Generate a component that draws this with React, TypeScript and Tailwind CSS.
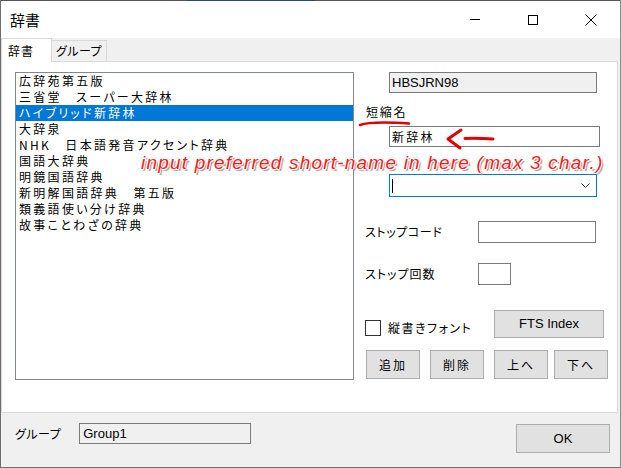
import React from "react";

const items = [
  "広辞苑第五版",
  "三省堂　スーパー大辞林",
  "ハイブリッド新辞林",
  "大辞泉",
  "NHK　日本語発音アクセント辞典",
  "国語大辞典",
  "明鏡国語辞典",
  "新明解国語辞典　第五版",
  "類義語使い分け辞典",
  "故事ことわざの辞典",
];

function Btn({ children, className = "" }: { children: React.ReactNode; className?: string }) {
  return (
    <div
      className={
        "flex items-center justify-center bg-[#e1e1e1] border border-[#adadad] text-[12px] text-black " +
        className
      }
    >
      {children}
    </div>
  );
}

export default function App() {
  return (
    <div className="relative w-[621px] h-[468px] flex flex-col bg-[#f0f0f0] border-l border-r border-b border-l-[#6e6e6e] border-r-[#8c8c8c] border-b-[#6e6e6e] overflow-hidden font-['Noto_Sans_CJK_JP',sans-serif] text-black [font-feature-settings:'palt']">
      {/* top border */}
      <div className="flex h-px shrink-0">
        <div className="w-[186px] bg-[#555]" />
        <div className="w-[128px] bg-[#2b4a6a]" />
        <div className="flex-1 bg-[#555]" />
      </div>
      {/* title bar */}
      <div className="h-[37px] shrink-0 bg-white flex items-center">
        <div className="pl-[9px] text-[15px] leading-none">辞書</div>
        <div className="ml-auto flex h-full">
          <div className="w-[58px] h-full flex items-center justify-center">
            <div className="w-[10px] h-px bg-black" />
          </div>
          <div className="w-[58px] h-full flex items-center justify-center">
            <div className="w-[10px] h-[10px] border border-black" />
          </div>
          <div className="w-[58px] h-full flex items-center justify-center">
            <svg width="12" height="12" viewBox="0 0 12 12">
              <path d="M0.5 0.5 L11.5 11.5 M11.5 0.5 L0.5 11.5" stroke="#000" strokeWidth="1" fill="none" />
            </svg>
          </div>
        </div>
      </div>
      {/* tabs */}
      <div className="h-[23px] shrink-0 flex items-end">
        <div className="relative z-10 -mb-px w-[51px] h-[24px] bg-white border-t border-r border-l border-[#d9d9d9] flex items-center pl-[6px] text-[12px] tracking-[1px] leading-none">
          辞書
        </div>
        <div className="w-[55px] h-[21px] bg-[#f0f0f0] border-t border-r border-[#d9d9d9] flex items-center justify-center text-[12px] tracking-[0.5px] leading-none">
          グループ
        </div>
      </div>
      {/* panel */}
      <div className="w-[617px] h-[352px] shrink-0 bg-white border border-[#d9d9d9] flex">
        {/* listbox */}
        <div className="ml-[13px] mt-[10px] w-[339px] h-[308px] border border-[#828790] pt-0 flex flex-col">
          {items.map((t, i) => (
            <div
              key={i}
              className={
                "h-[16px] flex items-center pl-[3px] text-[12px] tracking-[2.3px] leading-none whitespace-nowrap " +
                (i === 2 ? "bg-[#0078d7] text-white" : "text-black")
              }
            >
              {t}
            </div>
          ))}
        </div>
        {/* right column */}
        <div className="flex flex-col">
          <div className="ml-[35px] mt-[10px] w-[208px] h-[21px] bg-[#f0f0f0] border border-[#7a7a7a] flex items-center pl-[2px] font-['Liberation_Sans',sans-serif] text-[13px] leading-none">
            HBSJRN98
          </div>
          <div className="ml-[12px] mt-[11px] h-[16px] flex items-center text-[12px] tracking-[1.7px] leading-none">
            短縮名
          </div>
          <div className="ml-[35px] mt-[6px] w-[211px] h-[21px] bg-white border border-[#7a7a7a] flex items-center pl-[2px] text-[12px] tracking-[2.3px] leading-none">
            新辞林
          </div>
          <div className="ml-[35px] mt-[27px] w-[208px] h-[23px] bg-white border border-[#0078d7] flex items-center pl-[2px] pr-[6px]">
            <div className="w-px h-[14px] bg-black" />
            <svg className="ml-auto" width="9" height="5" viewBox="0 0 9 5">
              <path d="M0.5 0.5 L4.5 4.5 L8.5 0.5" stroke="#333" strokeWidth="1" fill="none" />
            </svg>
          </div>
          <div className="ml-[11px] mt-[24px] flex items-center">
            <div className="w-[113px] text-[12px] tracking-[0.6px] leading-none">ストップコード</div>
            <div className="w-[118px] h-[22px] bg-white border border-[#7a7a7a]" />
          </div>
          <div className="ml-[11px] mt-[20px] flex items-center">
            <div className="w-[113px] text-[12px] tracking-[1px] leading-none">ストップ回数</div>
            <div className="w-[33px] h-[22px] bg-white border border-[#7a7a7a]" />
          </div>
          <div className="ml-[11px] mt-[25px] flex items-start">
            <div className="w-[129px] mt-[10px] flex items-center">
              <div className="w-[16px] h-[16px] border border-[#333] bg-white" />
              <div className="ml-[7px] text-[12px] tracking-[1.5px] leading-none">縦書きフォント</div>
            </div>
            <Btn className="w-[110px] h-[28px] font-['Liberation_Sans',sans-serif] text-[13px]">FTS Index</Btn>
          </div>
          <div className="ml-[12px] mt-[12px] flex">
            <Btn className="w-[54px] h-[29px] tracking-[2px]">追加</Btn>
            <Btn className="ml-[10px] w-[54px] h-[29px] tracking-[2px]">削除</Btn>
            <Btn className="ml-[10px] w-[54px] h-[29px] tracking-[2px]">上へ</Btn>
            <Btn className="ml-[6px] w-[54px] h-[29px] tracking-[2px]">下へ</Btn>
          </div>
        </div>
      </div>
      {/* bottom */}
      <div className="flex-1 flex items-start">
        <div className="ml-[14px] mt-[13px] h-[16px] flex items-center text-[12px] tracking-[0.5px] leading-none">
          グループ
        </div>
        <div className="ml-[18px] mt-[10px] w-[172px] h-[21px] bg-[#f0f0f0] border border-[#7a7a7a] flex items-center pl-[3px] font-['Liberation_Sans',sans-serif] text-[13px] leading-none">
          Group1
        </div>
        <Btn className="ml-auto mr-[10px] mt-[11px] w-[94px] h-[29px] font-['Liberation_Sans',sans-serif] text-[13px]">OK</Btn>
      </div>

      {/* red annotations (overlay) */}
      <svg className="absolute left-[356px] top-[118px] pointer-events-none" width="58" height="12" viewBox="0 0 58 12">
        <path d="M3 7 C 10 4.5, 30 4, 52 5.5" stroke="#e00000" strokeWidth="2.6" fill="none" strokeLinecap="round" />
      </svg>
      <svg className="absolute left-[442px] top-[126px] pointer-events-none" width="56" height="26" viewBox="0 0 56 26">
        <path d="M18 4 L5 13 L17 22" stroke="#e00000" strokeWidth="3" fill="none" strokeLinecap="round" strokeLinejoin="round" />
        <path d="M22 12.5 C 32 12, 42 12.5, 50 13" stroke="#e00000" strokeWidth="3" fill="none" strokeLinecap="round" />
      </svg>
      <div className="absolute left-[140px] top-[151px] whitespace-nowrap pointer-events-none font-['Liberation_Sans',sans-serif] italic text-[19px] tracking-[1.2px] leading-[24px] text-[#ff1a1a] [text-shadow:1px_0_0_#fff,-1px_0_0_#fff,0_1px_0_#fff,0_-1px_0_#fff,2px_2px_1px_#9a9a9a]">
        input preferred short-name in here (max 3 char.)
      </div>
    </div>
  );
}
